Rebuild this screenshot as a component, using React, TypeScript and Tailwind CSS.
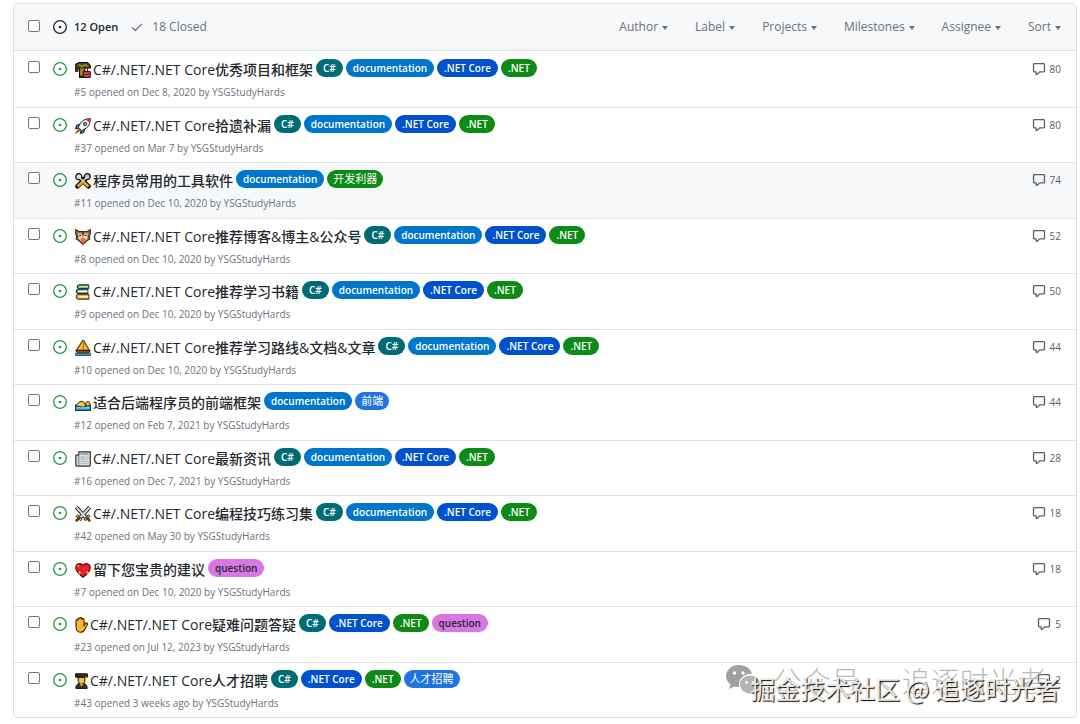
import React from "react";

type LabelName = "C#" | "documentation" | ".NET Core" | ".NET" | "question" | "开发利器" | "前端" | "人才招聘";

const LABEL_STYLES: Record<LabelName, string> = {
  "C#": "bg-[#006b75] text-white px-[7px] text-[10px] font-semibold",
  documentation: "bg-[#0075ca] text-white px-[7px] text-[10px] font-semibold",
  ".NET Core": "bg-[#0052cc] text-white px-[7px] text-[10px] font-semibold",
  ".NET": "bg-[#0e8a16] text-white px-[7px] text-[10px] font-semibold",
  question: "bg-[#d876e3] text-[#24292f] px-[7px] text-[10px] font-semibold",
  开发利器: "bg-[#0e8a16] text-white px-1.5 text-[11px] font-normal",
  前端: "bg-[#1d76db] text-white px-1.5 text-[11px] font-normal",
  人才招聘: "bg-[#1d76db] text-white px-1.5 text-[11px] font-normal",
};

const Crane = () => (
  <>
    <path d="M.7 2.2 4 .7h8.5l2.800 3v2.200H9.800v9.400H4.600V6.200H2.800v3H.7z" fill="#5e4e22" stroke="#111" strokeWidth="1.200" />
    <path d="m5 7 4 3-4 3m4-6-4 3 4 3M4 2.600l3 2 3-2 3 2" fill="none" stroke="#d9a92a" />
    <path d="M8.300 9.600h7v5.800h-7z" fill="#e23a4e" stroke="#111" />
    <path d="M12.600 6v3.400" stroke="#111" />
    <path d="M9 12.400h5.800" stroke="#8b1524" />
  </>
);

const Rocket = () => (
  <>
    <path d="m5.200 6.200-3.600 1L.6 10.800l3.200-.8zM9.800 10.800l-1 3.800-3.600.8 1-3.400z" fill="#3c9ad8" stroke="#111" />
    <path d="M4 10.500.8 15.200l4.700-3.200z" fill="#f7a928" stroke="#8b2a12" />
    <path d="M15.400.6c-4.200 0-7.500 1.300-9.800 4.300L3.200 9.400l3.400 3.400 4.600-2.600C14.100 7.900 15.400 4.800 15.400.6z" fill="#f2f5f7" stroke="#222" />
    <path d="M11 1.500c1.400-.6 2.800-.9 4.400-.9 0 1.600-.3 3-.9 4.400z" fill="#e5323e" />
    <circle cx="10" cy="6" r="1.700" fill="#48aee8" stroke="#222" strokeWidth=".8" />
  </>
);

const Tools = () => (
  <>
    <path d="m3.200 3 10.300 10.300M12.800 3 2.500 13.300" stroke="#111" strokeWidth="4.600" strokeLinecap="round" />
    <path d="m8 8.500 5.500 5M8 8.500l-5.500 5" stroke="#f0a81e" strokeWidth="2.600" />
    <circle cx="3.800" cy="3.700" r="3" fill="#d8dde0" stroke="#111" strokeWidth="1.200" />
    <circle cx="12.200" cy="3.700" r="3" fill="#bcc3c7" stroke="#111" strokeWidth="1.200" />
    <path d="m4 4 4.500 4.500M12 4 8 8" stroke="#d8dde0" strokeWidth="1.600" />
  </>
);

const Tiger = () => (
  <>
    <path d="M.8.8 4 2.500h8L15.200.8l.2 4-1.200 2 .6 3.200-3 1.800L8 15.400 4.200 11.800l-3-1.800.6-3.200-1.200-2z" fill="#a5713f" stroke="#3f2a1a" strokeWidth="1.200" />
    <path d="M3 4.500h3.500L8 9l1.500-4.500H13l-.5 5L8 14.500 3.500 9.500z" fill="#e9d8c4" />
    <path d="M5.400 9.200h5.200l-.6 3.600-2 1.600-2-1.600z" fill="#f1642f" />
    <path d="M4.300 6.300h1.800m3.800 0h1.800M8 2.600v3M1.800 7.500l1.600.5m10.800-.5-1.600.5" stroke="#222" strokeWidth="1.200" />
  </>
);

const Books = () => (
  <>
    <path d="M3.500.8h10.200v3.900H3.500C1.800 4.700 1.800.8 3.500.8z" fill="#4fae3f" stroke="#1a2a12" />
    <path d="M4 2.800h9.200" stroke="#e4f0dc" strokeWidth="1.200" />
    <path d="M2.500 5.200h10.300v4.300H2.500C.8 9.500.8 5.200 2.500 5.200z" fill="#3a9fb0" stroke="#10283b" />
    <path d="M3.400 7.400h9" stroke="#fff" strokeWidth="1.800" />
    <path d="M2.800 10.200h11v5h-11c-2 0-2-5 0-5z" fill="#f19a22" stroke="#3d2408" />
    <path d="M3.600 12.700h9.700" stroke="#fff4d8" strokeWidth="1.800" />
  </>
);

const Boat = () => (
  <>
    <path d="M7.600.6 1.300 10.300h13L8.800.6z" fill="#f7b92f" stroke="#6b430b" strokeWidth="1.200" />
    <path d="M8.400 2v8" stroke="#8a5a14" strokeWidth=".8" />
    <path d="M.8 10.400h14.400L13.400 13.400H3z" fill="#8a4f1c" stroke="#2c1a09" />
    <path d="M.3 13.200h15.400v2.300H.3z" fill="#2da7c8" stroke="#0e4052" strokeWidth=".8" />
  </>
);

const Swimmer = () => (
  <>
    <path d="M.6 10.200h14.800v5.200H.6z" fill="#27b4e0" stroke="#0d3e58" strokeWidth="1.200" />
    <path d="M1.600 11.200C2.500 7.500 5 5.500 8.500 6.700L10 9l1 2.400-4 .8-2-.6z" fill="#f6c14b" stroke="#3b2a0b" />
    <circle cx="12.800" cy="8.800" r="2.200" fill="#f6c14b" stroke="#3b2a0b" />
    <path d="m1.400 13.200 2.400-.8 2.400.8 2.400-.8 2.400.8 2.400-.8 1.400.6" fill="none" stroke="#7fdcf5" />
  </>
);

const Newspaper = () => (
  <>
    <path d="M3.800.8h11.500v13.400l-1 1H1.800l-1-1V4.500l3-.8z" fill="#d9dfe0" stroke="#333" strokeWidth="1.200" />
    <path d="M3.800 3.700v10.200" stroke="#777" />
    <path d="M5.500 3h8" stroke="#7d8a8c" strokeWidth="1.200" />
    <path d="M5.500 5.200h4v3.600h-4z" fill="#a9c6c8" />
    <path d="M10.500 6h3m-3 2h3m-8 2.400h8m-8 2h8" stroke="#b2bcbe" />
  </>
);

const Swords = () => (
  <>
    <path d="m1.200 1.200 10.600 11.400M14.800 1.200 4.200 12.600" stroke="#222" strokeWidth="4" />
    <path d="m1.400 1.400 9.800 10.600M14.600 1.400 4.800 12" stroke="#d6dcde" strokeWidth="2" />
    <path d="m1.500 9.300 5 5M14.500 9.300l-5 5" stroke="#222" strokeWidth="3" />
    <path d="m1.800 9.600 4.400 4.400M14.200 9.600 9.800 14" stroke="#efb62f" strokeWidth="1.400" />
    <path d="m3.800 12.200-2.300 2.400m10.700-2.400 2.300 2.400" stroke="#5a3613" strokeWidth="2.400" strokeLinecap="round" />
  </>
);

const Heart = () => (
  <>
    <path d="M8 15.200C4.500 12.600.8 9.500.8 5.700c0-4.300 5-5.600 7.200-2.200 2.200-3.400 7.200-2.100 7.200 2.200 0 3.800-3.700 6.900-7.200 9.500z" fill="#e8202c" stroke="#4e0b10" strokeWidth="1.200" />
    <path d="m4.600 8.500.7 1.700 1.700.7-1.700.7-.7 1.700-.7-1.700-1.700-.7 1.700-.7zM12.600 8.500l.6 1.400 1.400.6-1.400.6-.6 1.400-.6-1.400-1.400-.6 1.400-.6zM3.200 2.400l.5 1.200 1.200.5-1.200.5-.5 1.200-.5-1.200-1.200-.5 1.200-.5z" fill="#f9a23c" />
  </>
);

const Hand = () => (
  <path
    d="M1 9V3.800c0-1.300 1.700-1.300 1.800 0V2.200c0-1.500 2-1.500 2 0v-.5c0-1.500 2.200-1.500 2.200 0v1c0-1.400 2-1.400 2 0v5.700l1.500-2c1.200-1.200 2.600 0 1.800 1.400l-2.500 4.700c-.8 1.800-2 2.800-4.300 2.800C2.500 15.300 1 13.200 1 9z"
    fill="#fbb829"
    stroke="#3a2705"
    strokeWidth="1.100"
  />
);

const Student = () => (
  <>
    <path d="M3.200 4h6.600v4.200c0 3.400-6.600 3.400-6.600 0z" fill="#f6bd3a" stroke="#2a1c08" />
    <path d="M.6.8h11.800v3.400H.6z" fill="#2d2f33" stroke="#111" />
    <path d="M.8 15.400c0-3.200 1.500-4.500 3.700-5l2 1.600 2-1.600c2.200.5 3.700 1.800 3.700 5z" fill="#33363b" stroke="#111" />
    <path d="M11 3.500v4.300" stroke="#f6bd3a" />
    <path d="m4.600 10.600 1.900 2.800 1.900-2.800" fill="#f6bd3a" />
  </>
);

interface Issue {
  number: number;
  title: string;
  Emoji: () => React.JSX.Element;
  narrow?: boolean;
  opened: string;
  labels: LabelName[];
  comments: number;
  hovered?: boolean;
}

const ISSUES: Issue[] = [
  { number: 5, Emoji: Crane, title: "C#/.NET/.NET Core优秀项目和框架", opened: "on Dec 8, 2020", labels: ["C#", "documentation", ".NET Core", ".NET"], comments: 80 },
  { number: 37, Emoji: Rocket, title: "C#/.NET/.NET Core拾遗补漏", opened: "on Mar 7", labels: ["C#", "documentation", ".NET Core", ".NET"], comments: 80 },
  { number: 11, Emoji: Tools, title: "程序员常用的工具软件", opened: "on Dec 10, 2020", labels: ["documentation", "开发利器"], comments: 74, hovered: true },
  { number: 8, Emoji: Tiger, title: "C#/.NET/.NET Core推荐博客&博主&公众号", opened: "on Dec 10, 2020", labels: ["C#", "documentation", ".NET Core", ".NET"], comments: 52 },
  { number: 9, Emoji: Books, title: "C#/.NET/.NET Core推荐学习书籍", opened: "on Dec 10, 2020", labels: ["C#", "documentation", ".NET Core", ".NET"], comments: 50 },
  { number: 10, Emoji: Boat, title: "C#/.NET/.NET Core推荐学习路线&文档&文章", opened: "on Dec 10, 2020", labels: ["C#", "documentation", ".NET Core", ".NET"], comments: 44 },
  { number: 12, Emoji: Swimmer, title: "适合后端程序员的前端框架", opened: "on Feb 7, 2021", labels: ["documentation", "前端"], comments: 44 },
  { number: 16, Emoji: Newspaper, title: "C#/.NET/.NET Core最新资讯", opened: "on Dec 7, 2021", labels: ["C#", "documentation", ".NET Core", ".NET"], comments: 28 },
  { number: 42, Emoji: Swords, title: "C#/.NET/.NET Core编程技巧练习集", opened: "on May 30", labels: ["C#", "documentation", ".NET Core", ".NET"], comments: 18 },
  { number: 7, Emoji: Heart, title: "留下您宝贵的建议", opened: "on Dec 10, 2020", labels: ["question"], comments: 18 },
  { number: 23, Emoji: Hand, narrow: true, title: "C#/.NET/.NET Core疑难问题答疑", opened: "on Jul 12, 2023", labels: ["C#", ".NET Core", ".NET", "question"], comments: 5 },
  { number: 43, Emoji: Student, narrow: true, title: "C#/.NET/.NET Core人才招聘", opened: "3 weeks ago", labels: ["C#", ".NET Core", ".NET", "人才招聘"], comments: 2 },
];

const FILTERS = ["Author", "Label", "Projects", "Milestones", "Assignee", "Sort"];

function IssueOpenedIcon({ className }: { className: string }) {
  return (
    <svg viewBox="0 0 16 16" fill="currentColor" className={`size-3.5 shrink-0 ${className}`} aria-hidden="true">
      <path d="M8 9.500a1.500 1.500 0 100-3 1.500 1.500 0 000 3z" />
      <path d="M8 0a8 8 0 100 16A8 8 0 008 0zM1.500 8a6.500 6.500 0 1113 0 6.500 6.500 0 01-13 0z" />
    </svg>
  );
}

function CheckIcon() {
  return (
    <svg viewBox="0 0 16 16" fill="currentColor" className="size-3.5" aria-hidden="true">
      <path d="M13.780 4.220a.75.75 0 010 1.060l-7.250 7.250a.75.75 0 01-1.060 0L2.220 9.280a.75.75 0 011.060-1.060L6 10.940l6.720-6.720a.75.75 0 011.060 0z" />
    </svg>
  );
}

function CommentIcon() {
  return (
    <svg viewBox="0 0 16 16" fill="currentColor" className="size-3.5" aria-hidden="true">
      <path d="M2.750 2.500a.25.25 0 00-.25.25v7.500c0 .138.112.25.25.25h2a.75.75 0 01.75.75v2.190l2.720-2.720a.75.75 0 01.53-.22h4.500a.25.25 0 00.25-.25v-7.500a.25.25 0 00-.25-.25H2.750zM1 2.750C1 1.784 1.784 1 2.750 1h10.500c.966 0 1.750.784 1.750 1.750v7.500A1.750 1.750 0 0113.250 12H9.060l-2.573 2.573A1.457 1.457 0 014 13.543V12H2.750A1.750 1.750 0 011 10.250v-7.500z" />
    </svg>
  );
}

function Checkbox({ label }: { label: string }) {
  return (
    <input
      type="checkbox"
      aria-label={label}
      className="size-3 shrink-0 appearance-none rounded-[2px] border border-[#767676] bg-white checked:bg-[#0969da]"
    />
  );
}

function IssueRow({ issue }: { issue: Issue }) {
  const { Emoji } = issue;
  return (
    <li
      className={`flex items-start border-t border-[#e1e4e8] pr-[15px] pl-3.5 first:border-transparent odd:h-14 even:h-[55px] ${issue.hovered ? "bg-[#f6f8fa]" : ""}`}
    >
      <span className="flex pt-[9px]">
        <Checkbox label={`Select issue #${issue.number}`} />
      </span>
      <IssueOpenedIcon className="mt-[10px] ml-[13px] text-[#2c974b]" />
      <div className="ml-[7px] min-w-0 flex-1 pt-[7px]">
        <div className="flex items-start gap-[3px]">
          <h3 className="flex h-5 items-center pt-0.5 text-sm font-medium text-[#24292f]">
            <a href={`#issue-${issue.number}`} className="flex items-center gap-0.5 whitespace-nowrap">
              <svg
                viewBox={issue.narrow ? "0 0 13 16" : "0 0 16 16"}
                className={`ml-px h-4 shrink-0 ${issue.narrow ? "w-[13px]" : "w-4"}`}
                aria-hidden="true"
              >
                <Emoji />
              </svg>
              {issue.title}
            </a>
          </h3>
          {issue.labels.map((name) => (
            <a
              key={name}
              href="#labels"
              className={`flex h-[18px] items-center rounded-full whitespace-nowrap ${LABEL_STYLES[name]}`}
            >
              {name}
            </a>
          ))}
        </div>
        <p className="mt-[3px] text-[10px] leading-5 text-[#6a737d]">
          #{issue.number} opened {issue.opened} by <a href="#author">YSGStudyHards</a>
        </p>
      </div>
      <a
        href="#comments"
        className="flex items-center gap-1 pt-[7px] text-[10px] leading-5 text-[#57606a]"
        aria-label={`${issue.comments} comments`}
      >
        <CommentIcon />
        {issue.comments}
      </a>
    </li>
  );
}

function Watermark() {
  return (
    <div
      className="pointer-events-none absolute right-0 bottom-0 h-[60px] w-[355px] font-['Noto_Sans_CJK_SC',sans-serif]"
      aria-hidden="true"
    >
      <div className="absolute top-0 left-0 flex items-center gap-3 text-[#8c8c8c]/60">
        <svg viewBox="0 0 36 32" className="h-8 w-9">
          <path d="M14 1C6.500 1 1 5.800 1 12c0 3.500 1.800 6.400 4.500 8.300L4.300 25l5-2.600c1.500.4 3 .6 4.700.6C13 15 19 9.500 27 9.800 25.800 4.600 20.500 1 14 1z" fill="#a0a0a0" />
          <path d="M35 20.500c0-5-4.600-9-10-9s-10 4-10 9 4.500 9 10 9c1.200 0 2.400-.2 3.500-.6l4 2.200-1-3.700c2.200-1.600 3.500-4.200 3.500-6.900z" fill="#b4b4b4" />
          <circle cx="9.500" cy="9" r="1.700" fill="#fff" />
          <circle cx="18" cy="9" r="1.700" fill="#fff" />
          <circle cx="21.500" cy="18.500" r="1.300" fill="#fff" />
          <circle cx="28.500" cy="18.500" r="1.300" fill="#fff" />
        </svg>
        <span className="text-[29px] leading-8 font-light whitespace-nowrap">公众号 · 追逐时光者</span>
      </div>
      <div className="absolute right-5 bottom-5 text-[25px] leading-8 whitespace-nowrap text-[#e9e9e9] [text-shadow:1px_1px_1px_#000]">
        掘金技术社区 @ 追逐时光者
      </div>
    </div>
  );
}

export default function App() {
  return (
    <main className="relative bg-white pt-[3px] pr-[3px] pb-1.5 pl-[13px] font-['Open_Sans','Noto_Sans_CJK_SC',sans-serif]">
      <section className="overflow-hidden rounded-[5px] border border-[#d8dee4]">
        <header className="flex h-[47px] items-center border-b border-[#d8dee4] bg-[#f6f8fa] pr-[15px] pl-3.5 text-xs text-[#6a737d]">
          <span className="flex pb-0.5">
            <Checkbox label="Select all issues" />
          </span>
          <a href="#open" className="ml-[13px] flex items-center gap-[7px] text-[11px] font-semibold text-[#24292f]">
            <IssueOpenedIcon className="" />
            12 Open
          </a>
          <a href="#closed" className="ml-3 flex items-center gap-2">
            <CheckIcon />
            18 Closed
          </a>
          <div className="ml-auto flex gap-[27px]">
            {FILTERS.map((name) => (
              <button key={name} type="button" className="flex items-center gap-1">
                {name}
                <span className="mt-0.5 border-x-[3px] border-t-4 border-x-transparent border-t-current" />
              </button>
            ))}
          </div>
        </header>
        <ul>
          {ISSUES.map((issue) => (
            <IssueRow key={issue.number} issue={issue} />
          ))}
        </ul>
      </section>
      <Watermark />
    </main>
  );
}
